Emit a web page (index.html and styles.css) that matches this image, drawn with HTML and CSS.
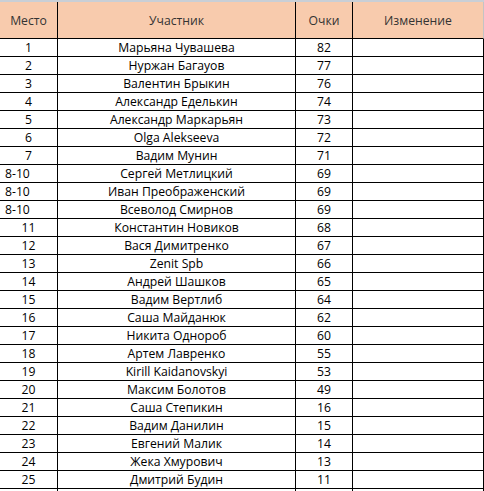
FILE: index.html
```html
<!DOCTYPE html>
<html lang="ru">
<head>
<meta charset="utf-8">
<link rel="stylesheet" href="styles.css">
</head>
<body>
<div class="topband"></div>
<div class="sheet">
  <div class="c h">Место</div><div class="c h">Участник</div><div class="c h">Очки</div><div class="c h last">Изменение</div>
  <div class="c">1</div><div class="c">Марьяна Чувашева</div><div class="c">82</div><div class="c"></div>
  <div class="c">2</div><div class="c">Нуржан Багауов</div><div class="c">77</div><div class="c"></div>
  <div class="c">3</div><div class="c">Валентин Брыкин</div><div class="c">76</div><div class="c"></div>
  <div class="c">4</div><div class="c">Александр Еделькин</div><div class="c">74</div><div class="c"></div>
  <div class="c">5</div><div class="c">Александр Маркарьян</div><div class="c">73</div><div class="c"></div>
  <div class="c">6</div><div class="c">Olga Alekseeva</div><div class="c">72</div><div class="c"></div>
  <div class="c">7</div><div class="c">Вадим Мунин</div><div class="c">71</div><div class="c"></div>
  <div class="c l">8-10</div><div class="c">Сергей Метлицкий</div><div class="c">69</div><div class="c"></div>
  <div class="c l">8-10</div><div class="c">Иван Преображенский</div><div class="c">69</div><div class="c"></div>
  <div class="c l">8-10</div><div class="c">Всеволод Смирнов</div><div class="c">69</div><div class="c"></div>
  <div class="c">11</div><div class="c">Константин Новиков</div><div class="c">68</div><div class="c"></div>
  <div class="c">12</div><div class="c">Вася Димитренко</div><div class="c">67</div><div class="c"></div>
  <div class="c">13</div><div class="c">Zenit Spb</div><div class="c">66</div><div class="c"></div>
  <div class="c">14</div><div class="c">Андрей Шашков</div><div class="c">65</div><div class="c"></div>
  <div class="c">15</div><div class="c">Вадим Вертлиб</div><div class="c">64</div><div class="c"></div>
  <div class="c">16</div><div class="c">Саша Майданюк</div><div class="c">62</div><div class="c"></div>
  <div class="c">17</div><div class="c">Никита Однороб</div><div class="c">60</div><div class="c"></div>
  <div class="c">18</div><div class="c">Артем Лавренко</div><div class="c">55</div><div class="c"></div>
  <div class="c">19</div><div class="c">Kirill Kaidanovskyi</div><div class="c">53</div><div class="c"></div>
  <div class="c">20</div><div class="c">Максим Болотов</div><div class="c">49</div><div class="c"></div>
  <div class="c">21</div><div class="c">Саша Степикин</div><div class="c">16</div><div class="c"></div>
  <div class="c">22</div><div class="c">Вадим Данилин</div><div class="c">15</div><div class="c"></div>
  <div class="c">23</div><div class="c">Евгений Малик</div><div class="c">14</div><div class="c"></div>
  <div class="c">24</div><div class="c">Жека Хмурович</div><div class="c">13</div><div class="c"></div>
  <div class="c">25</div><div class="c">Дмитрий Будин</div><div class="c">11</div><div class="c"></div>
  <div class="c"></div><div class="c"></div><div class="c"></div><div class="c"></div>
</div>
</body>
</html>
```
FILE: styles.css
```css
html, body {
  margin: 0;
  padding: 0;
  background: #ffffff;
  overflow: hidden;
}
body {
  font-family: "Open Sans", "Noto Sans", sans-serif;
  font-size: 12.2px;
  color: #000;
}
.topband {
  height: 2px;
  background: #c9cfd6;
}
.sheet {
  display: grid;
  grid-template-columns: 58px 238px 57px 131px;
  grid-template-rows: 37px;
  grid-auto-rows: 18px;
}
.c {
  box-sizing: border-box;
  border-right: 1px solid #000;
  border-bottom: 1px solid #000;
  display: flex;
  align-items: center;
  justify-content: center;
  white-space: nowrap;
  overflow: hidden;
  line-height: 17px;
}
.c.l {
  justify-content: flex-start;
  padding-left: 5px;
}
.c.h {
  background: #f8cbad;
  color: #333;
}
.c.h.last {
  border-right-color: #c4c4c4;
}
```
